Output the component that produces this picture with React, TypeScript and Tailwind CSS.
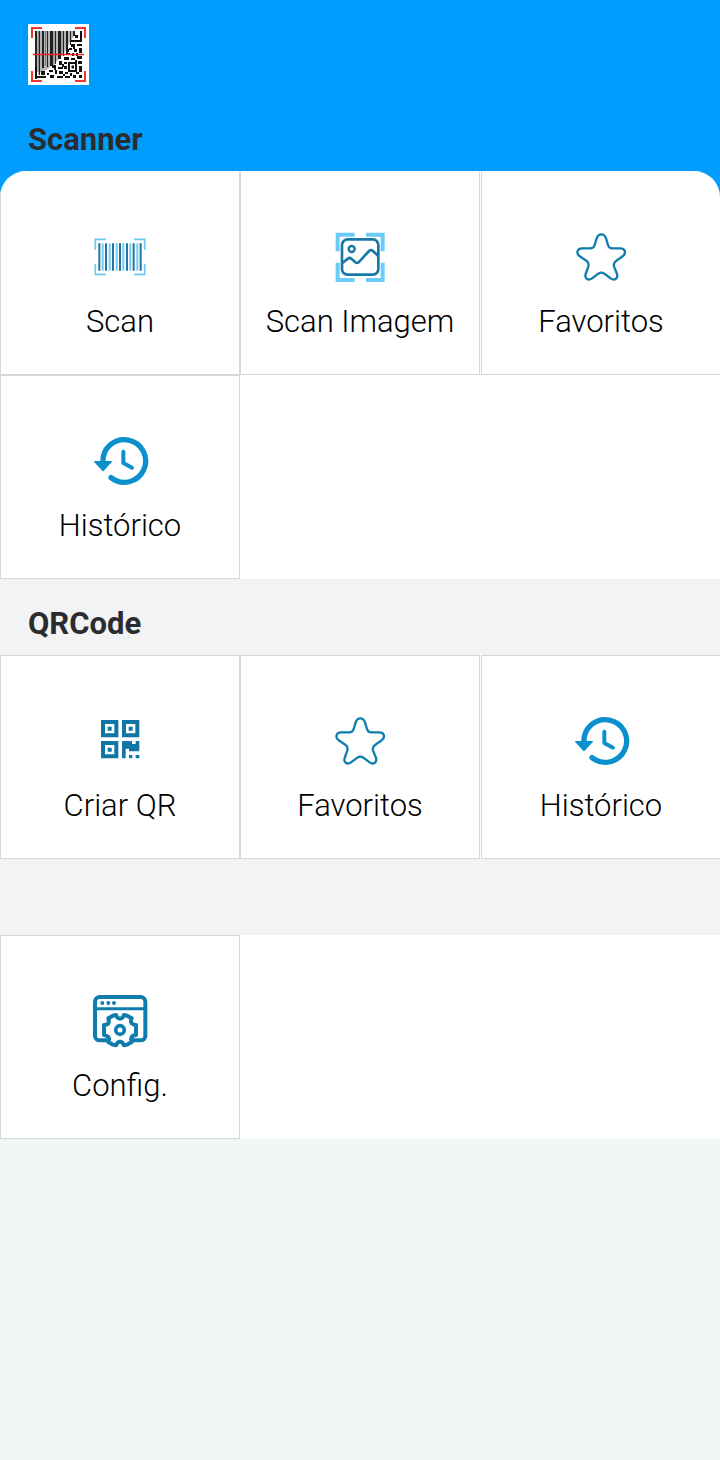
import React from 'react';

const ScannerLogo: React.FC = () => (
  <svg viewBox="0 0 61 61" className="block h-[61px] w-[61px]" role="img" aria-label="Scanner">
    <rect width="61" height="61" fill="#fff" />
    {/* barcode half */}
    <path d="M7 7h40v3l-6 10-5 9-8 9-8 7-7 3H7z" fill="#b5b5b5" />
    <g fill="#222">
      <path d="M7 7h2v48h-2zM11 7h1v44h-1zM14 7h2v37h-2zM19 7h1v36h-1zM22 7h3v35h-3zM27 7h1v33h-1zM30 7h3v28h-3zM35 7h1v25h-1zM38 7h2v22h-2zM42 7h1v14h-1zM45 7h2v5h-2z" />
      <path d="M10 7h.6v44h-.6zM17 7h1v35h-1zM25.6 7h.6v34h-.6zM33.7 7h.6v24h-.6z" fill="#777" />
    </g>
    {/* QR half */}
    <g fill="#111">
      <path d="M52 7h2v11h-11v-2h9zM47 11h3v3h-3zM7 43h2v9h9v2h-11zM13 47h4v4h-4z" />
      <path d="M43 20h4v3h-4zM49 20h5v2h-5zM41 24h3v2h-3zM46 25h3v3h-3zM51 24h3v5h-3zM38 29h4v2h-4zM44 29h2v3h-2zM36 33h5v3h-5zM43 34h4v2h-4zM49 32h5v3h-5zM31 37h3v4h-3zM36 38h3v2h-3zM50 37h4v3h-4zM24 41h4v3h-4zM30 43h5v2h-5zM36 42h3v3h-3zM51 42h3v6h-3zM21 46h4v2h-4zM27 46h2v4h-2zM31 47h4v3h-4zM37 48h3v2h-3zM22 51h4v3h-4zM29 52h6v2h-6zM37 52h5v2h-5zM45 51h3v3h-3zM51 51h3v3h-3z" />
      <path d="M40 38h9v10h-9zM42 40v6h5v-6z" fillRule="evenodd" />
      <path d="M43.5 41.5h2.5v3h-2.5zM39 25h2v3h-2zM45 23h2v2h-2zM34 40h2v3h-2zM26 44h2v2h-2zM35 50h2v2h-2zM48 48h3v2h-3zM42 49h2v3h-2zM19 49h2v2h-2zM48 29h2v3h-2zM47 36h2v2h-2z" />
    </g>
    <path
      d="M4 14V4h10M47 4h10v10M4 47v10h10M47 57h10V47"
      fill="none"
      stroke="#f03434"
      strokeWidth="2"
    />
    <path d="M5 30.5h51" stroke="#e82222" strokeWidth="1.6" />
  </svg>
);

const ScanIcon: React.FC = () => (
  <svg viewBox="30 30 180 180" className="h-[60px] w-[60px]" fill="none" aria-hidden="true">
    <path
      d="M46 90V58h32M162 58h32v32M46 131v32h32M162 163h32v-32"
      stroke="#6dc9ee"
      strokeWidth="5"
    />
    <path
      d="M68 70v82M89 70v82M110 70v82M130 70v82M151 70v82M172 70v82"
      stroke="#78cbf0"
      strokeWidth="6"
    />
    <path
      d="M58 70v82M78 70v82M99 70v82M120 70v82M141 70v82M161 70v82M182 70v82"
      stroke="#1d74a6"
      strokeWidth="6"
    />
  </svg>
);

const ImageIcon: React.FC = () => (
  <svg viewBox="30 30 180 180" className="h-[60px] w-[60px]" fill="none" aria-hidden="true">
    <path
      d="M53 94V44h51M138 44h50v50M53 128v52h51M138 180h50v-52"
      stroke="#6ccbf9"
      strokeWidth="12"
    />
    <rect x="66" y="58" width="109" height="106" rx="17" fill="#fff" stroke="#1678a6" strokeWidth="8" />
    <circle cx="95" cy="87" r="9" stroke="#1678a6" strokeWidth="7" />
    <path
      d="M67 129l17-13q5-4 10 0l12 11q5 4 10 0l31-34q6-5 12 0l15 14"
      stroke="#1678a6"
      strokeWidth="8"
    />
  </svg>
);

const StarIcon: React.FC = () => (
  <svg viewBox="32 30 180 180" className="h-[60px] w-[60px]" fill="none" aria-hidden="true">
    <path
      d="M123 43Q133 43 137 55L143 75Q146 85 156 85H180C196 85 198 101 187 109L168 122Q158 129 161 139L170 162C174 176 162 183 151 175L132 161Q123 155 114 161L95 175C84 183 72 176 76 162L84 139Q87 129 78 122L58 109C47 101 50 85 65 85H90Q100 85 103 75L109 55Q113 43 123 43Z"
      stroke="#107ead"
      strokeWidth="7"
      strokeLinejoin="round"
    />
  </svg>
);

const HistoryIcon: React.FC = () => (
  <svg viewBox="30 42 180 180" className="h-[60px] w-[60px]" fill="none" aria-hidden="true">
    <path
      d="M69 126A64 64 0 1 1 93 173"
      stroke="#0b90cd"
      strokeWidth="16"
      strokeLinecap="round"
    />
    <path d="M44 125H94L69 152Z" fill="#0b90cd" stroke="#0b90cd" strokeWidth="4" strokeLinejoin="round" />
    <path
      d="M130 95V129L156 143"
      stroke="#0b90cd"
      strokeWidth="12"
      strokeLinecap="round"
      strokeLinejoin="round"
    />
  </svg>
);

const QrIcon: React.FC = () => (
  <svg viewBox="30 42 180 180" className="h-[60px] w-[60px]" fill="#0f76a6" aria-hidden="true">
    <path
      fillRule="evenodd"
      d="M63 60h52v52h-52zM75 72v28h28v-28zM126 60h52v52h-52zM138 72v28h28v-28zM63 123h52v52h-52zM75 135v28h28v-28z"
    />
    <path d="M83 80h12v12h-12zM146 80h12v12h-12zM83 143h12v12h-12z" />
    <path d="M126 123h30v9h11v-9h11v31h-31v-8h-10v29h-11zM147 165h10v10h-10zM167 165h11v10h-11z" />
  </svg>
);

const ConfigIcon: React.FC = () => (
  <svg viewBox="30 42 180 180" className="h-[60px] w-[60px]" fill="none" aria-hidden="true">
    <rect x="45" y="51" width="151" height="130" rx="14" stroke="#107cab" strokeWidth="12" />
    <path d="M45 86h151" stroke="#107cab" strokeWidth="9" />
    <g fill="#107cab">
      <circle cx="67" cy="69" r="6" />
      <circle cx="85" cy="69" r="6" />
      <circle cx="102" cy="69" r="6" />
    </g>
    {/* clears the window's lower edge inside the gear */}
    <path
      d="M99 107L108 105Q112 116 120 116T132 105L141 107L155 115Q151 125 155 130T168 135V165Q158 166 155 171T155 186L141 194L132 196Q128 185 120 185T108 196L99 194L85 186Q89 176 85 171T72 165V135Q82 135 85 130T85 115Z"
      fill="#fff"
      stroke="#107cab"
      strokeWidth="12"
      strokeLinejoin="round"
    />
    <circle cx="120" cy="150" r="13" stroke="#107cab" strokeWidth="11" />
  </svg>
);

interface Item {
  label: string;
  icon: React.FC;
}

const SCANNER_ITEMS: Item[] = [
  { label: 'Scan', icon: ScanIcon },
  { label: 'Scan Imagem', icon: ImageIcon },
  { label: 'Favoritos', icon: StarIcon },
  { label: 'Histórico', icon: HistoryIcon },
];

const QRCODE_ITEMS: Item[] = [
  { label: 'Criar QR', icon: QrIcon },
  { label: 'Favoritos', icon: StarIcon },
  { label: 'Histórico', icon: HistoryIcon },
];

const CONFIG_ITEMS: Item[] = [{ label: 'Config.', icon: ConfigIcon }];

const SectionTitle: React.FC<{ title?: string }> = ({ title }) => (
  <div className="h-[76px] px-7 pt-[25px]">
    {title && <h2 className="text-[31px] leading-10 font-bold text-[#2b2c30]">{title}</h2>}
  </div>
);

const MenuGrid: React.FC<{ items: Item[]; rounded?: boolean }> = ({ items, rounded }) => (
  <div className={`grid grid-cols-3 bg-white ${rounded ? 'overflow-hidden rounded-t-[26px]' : ''}`}>
    {items.map(({ label, icon: Icon }, i) => (
      <button
        key={label}
        type="button"
        className={`flex h-[204px] flex-col items-center gap-3 border border-[#d5d6d8] pt-[58px] ${
          i % 3 === 2 ? 'ml-px border-r-0' : ''
        } ${rounded && i < 3 ? 'border-t-white' : ''}`}
      >
        <Icon />
        <span className="text-[31px] leading-10 font-light whitespace-nowrap text-black">{label}</span>
      </button>
    ))}
  </div>
);

const App: React.FC = () => {
  return (
    <div className="min-h-screen bg-[#f1f7f7] font-['Roboto',sans-serif]">
      <header className="bg-[#009dff]">
        <div className="px-7 pt-6 pb-[10px]">
          <ScannerLogo />
        </div>
        <SectionTitle title="Scanner" />
        <MenuGrid items={SCANNER_ITEMS} rounded />
      </header>
      <section className="bg-[#f2f3f5]">
        <SectionTitle title="QRCode" />
        <MenuGrid items={QRCODE_ITEMS} />
      </section>
      <section className="bg-[#f2f3f5]">
        <SectionTitle />
        <MenuGrid items={CONFIG_ITEMS} />
      </section>
    </div>
  );
};

export default App;
